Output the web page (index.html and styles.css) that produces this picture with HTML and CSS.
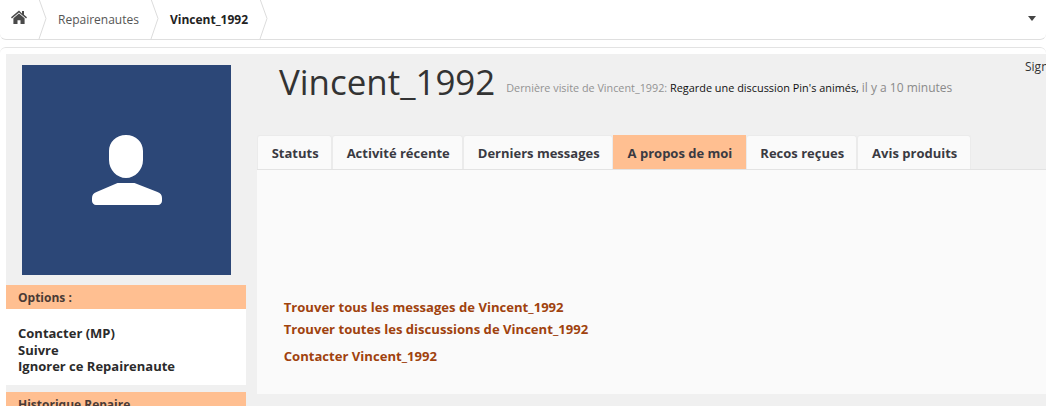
FILE: index.html
```html
<!DOCTYPE html>
<html lang="fr">
<head>
  <meta charset="UTF-8">
  <title>Vincent_1992</title>
  <link rel="stylesheet" href="styles.css">
</head>
<body>
  <nav class="breadcrumb">
    <a class="crumb crumb-home" href="#">
      <svg class="home-icon" width="16" height="14" viewBox="0 0 16 14"><path fill="#4a4a4a" d="M8 .6 0 7.300l.9 1.100L8 2.500l7.100 5.900.9-1.100-3-2.500V1h-2v2.600zM8 3.600 2.400 8.200V14h4.100v-3.800h3V14h4.100V8.200z"/></svg>
    </a>
    <svg class="chevron" width="10" height="39" viewBox="0 0 10 39"><path fill="none" stroke="#dcdcdc" d="M1 -1 8 18.500 1 39"/></svg>
    <a class="crumb" href="#">Repairenautes</a>
    <svg class="chevron" width="10" height="39" viewBox="0 0 10 39"><path fill="none" stroke="#dcdcdc" d="M1 -1 8 18.500 1 39"/></svg>
    <a class="crumb crumb-current" href="#">Vincent_1992</a>
    <svg class="chevron" width="10" height="39" viewBox="0 0 10 39"><path fill="none" stroke="#dcdcdc" d="M1 -1 8 18.500 1 39"/></svg>
    <span class="caret"></span>
  </nav>

  <div class="frame">
    <div class="profile">
      <aside class="sidebar">
        <div class="avatar">
          <svg width="72" height="72" viewBox="0 0 72 72"><path fill="#fff" d="M35 1c10 0 17 7 17 16v9c0 10-8 18-17 18s-17-8-17-18v-9c0-9 7-16 17-16zM26.500 49h17l23 9c3 1 4.500 3 4.500 6v3c0 2-2 4-4 4H5c-2 0-4-2-4-4v-3c0-3 1.500-5 4.500-6z"/></svg>
        </div>
        <h3 class="side-title">Options :</h3>
        <ul class="side-list">
          <li>Contacter (MP)</li>
          <li>Suivre</li>
          <li>Ignorer ce Repairenaute</li>
        </ul>
        <h3 class="side-title">Historique Repaire</h3>
      </aside>

      <main class="main">
        <header class="user-head">
          <h1 class="user-name">Vincent_1992</h1>
          <p class="last-visit">Dernière visite de Vincent_1992: <span class="activity">Regarde une discussion Pin's animés,</span> <span class="visit-time">il y a 10 minutes</span></p>
          <span class="report">Signaler</span>
        </header>

        <ul class="tabs">
          <li class="tab">Statuts</li>
          <li class="tab">Activité récente</li>
          <li class="tab">Derniers messages</li>
          <li class="tab tab-active">A propos de moi</li>
          <li class="tab">Recos reçues</li>
          <li class="tab">Avis produits</li>
        </ul>

        <section class="panel">
          <a class="panel-link" href="#">Trouver tous les messages de Vincent_1992</a>
          <a class="panel-link" href="#">Trouver toutes les discussions de Vincent_1992</a>
          <a class="panel-link panel-contact" href="#">Contacter Vincent_1992</a>
        </section>
      </main>
    </div>
  </div>
</body>
</html>
```

FILE: styles.css
```css
html, body {
  height: 406px;
  overflow: hidden;
}

body {
  margin: 0;
  background-color: #fff;
  font-family: "Open Sans", sans-serif;
  font-size: 13px;
  color: #333;
}

a {
  color: inherit;
  text-decoration: none;
}

.breadcrumb {
  display: flex;
  align-items: center;
  height: 39px;
  border-bottom: 1px solid #dfdfdf;
  border-radius: 0 0 6px 6px;
}

.crumb {
  font-size: 12px;
  color: #555;
  padding: 0 11px 0 10px;
}

.crumb-home {
  display: flex;
  width: 16px;
  padding: 0 11px 6px 11px;
}

.crumb-current {
  font-weight: 700;
  color: #222;
}

.chevron {
  flex: none;
}

.caret {
  margin-left: auto;
  margin-right: 10px;
  margin-bottom: 3px;
  border-style: solid;
  border-width: 5px 4.500px 0;
  border-color: #444 transparent transparent;
}

.frame {
  margin-top: 7px;
  padding: 6px 0 0 6px;
  border-top: 1px solid #e3e3e3;
  border-radius: 6px 6px 0 0;
}

.profile {
  display: flex;
  gap: 11px;
  background-color: #f0f0f0;
  height: 352px;
  overflow: hidden;
}

.sidebar {
  flex: none;
  width: 240px;
  padding-top: 11px;
}

.avatar {
  display: flex;
  align-items: center;
  justify-content: center;
  width: 209px;
  height: 210px;
  margin: 0 0 10px 16px;
  background-color: #2c4777;
}

.side-title {
  margin: 0;
  height: 24px;
  padding-left: 12px;
  background-color: #ffbf91;
  font-size: 12px;
  font-weight: 700;
  line-height: 25px;
  color: #4a3a35;
}

.side-list {
  margin: 0 0 7px;
  padding: 16px 12px 10.500px;
  list-style: none;
  background-color: #fff;
  font-size: 13px;
  font-weight: 700;
  line-height: 16.500px;
  color: #2b2b2b;
}

.main {
  flex: 1;
  min-width: 0;
}

.user-head {
  position: relative;
  display: flex;
  align-items: flex-start;
  height: 81px;
  padding-left: 22px;
}

.user-name {
  margin: 5px 0 0;
  font-size: 34.900px;
  font-weight: 400;
  line-height: 46px;
  color: #333;
}

.last-visit {
  margin: 26px 0 0 11px;
  font-size: 10.800px;
  line-height: 15px;
  color: #929292;
}

.activity {
  font-size: 10.900px;
  color: #111;
}

.visit-time {
  font-size: 12px;
  color: #8a8a8a;
}

.report {
  position: absolute;
  top: 4px;
  left: 768px;
  font-size: 12px;
  white-space: nowrap;
}

.tabs {
  display: flex;
  margin: 0;
  padding: 0;
  list-style: none;
  border-bottom: 1px solid #e3e3e3;
  height: 34px;
}

.tab {
  padding: 0 12.300px 0 13.700px;
  background-color: #fafafa;
  border: 1px solid #ebebeb;
  border-bottom: none;
  border-radius: 3px 3px 0 0;
  font-size: 13px;
  font-weight: 700;
  line-height: 35px;
  color: #3a3a42;
}

.tab-active {
  background-color: #ffbf91;
  border-color: #ffbf91;
  border-radius: 0;
}

.panel {
  display: flex;
  flex-direction: column;
  align-items: flex-start;
  height: 224px;
  padding-top: 126px;
  padding-left: 26.700px;
  box-sizing: border-box;
  background-color: #fafafa;
}

.panel-link {
  font-size: 13.100px;
  font-weight: 700;
  line-height: 22px;
  color: #a0420e;
}

.panel-contact {
  margin-top: 5px;
}
```
